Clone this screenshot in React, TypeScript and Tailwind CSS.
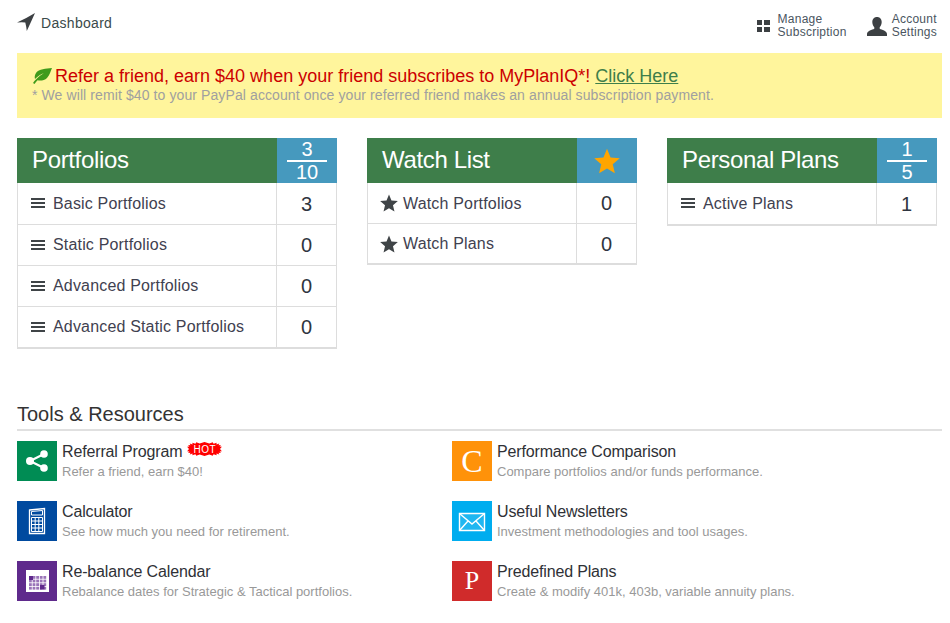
// ── Small drawn icons ────────────────────────────────────────────────────────

function Bars() {
  return (
    <svg width="15" height="11" viewBox="0 0 15 11" className="shrink-0 fill-[#3f4447]">
      <rect x="1" y="0" width="14" height="2" />
      <rect x="1" y="4" width="14" height="2" />
      <rect x="1" y="8" width="14" height="2" />
    </svg>
  );
}

function SolidStar({ size, color }: { size: number; color: string }) {
  return (
    <svg width={size} height={size} viewBox="0 0 24 24" className="shrink-0" fill={color}>
      <path d="M12 .8l3.300 7.900 8.500.7-6.500 5.600 2 8.300L12 18.900l-7.300 4.400 2-8.300L.2 9.400l8.500-.7z" />
    </svg>
  );
}

function Arrow() {
  return (
    <svg width="18" height="18" viewBox="0 0 18 18" className="shrink-0 fill-[#3c4043]">
      <path d="M18 0Q9 5.500 0 9.500q5 -.5 8.300 0q1 4 1.500 8.500Q14 9 18 0z" />
    </svg>
  );
}

function Leaf() {
  return (
    <svg width="20" height="16" viewBox="0 0 20 16" className="shrink-0">
      <path d="M20 0C14 1 7 .5 4 5c-1.500 2.200-1.500 4.500-1 6 3-3 6-5 9-6-3 2-7 4.500-11 10l1.500 1c1-1.500 2-2.800 3-3.700 3 .7 7 .3 9.500-2.300C18 6.800 18.500 3 20 0z" fill="#3f9b1b" />
    </svg>
  );
}

function Grid() {
  return (
    <svg width="13" height="13" viewBox="0 0 13 13" className="fill-[#3c4043]">
      <rect x="0" y="0" width="5" height="5" />
      <rect x="7" y="0" width="6" height="5" />
      <rect x="0" y="7" width="5" height="5" />
      <rect x="7" y="7" width="6" height="5" />
    </svg>
  );
}

function Person() {
  return (
    <svg width="20" height="19" viewBox="0 0 20 19" className="fill-[#3c4043]">
      <path d="M10 0c3 0 4.700 2.200 4.700 5 0 2.200-.9 4-2 5.200v1.600c2 1 7.300 2.200 7.300 5.200v2H0v-2c0-3 5.300-4.200 7.300-5.200v-1.600C6.200 9 5.300 7.200 5.300 5 5.300 2.200 7 0 10 0z" />
    </svg>
  );
}

function ShareIcon() {
  return (
    <svg width="40" height="40" viewBox="0 0 40 40" fill="#fff" stroke="#fff">
      <path d="M27 13L13 20l14 7" fill="none" strokeWidth="2.200" />
      <circle cx="27" cy="13" r="3.800" stroke="none" />
      <circle cx="13" cy="20" r="4" stroke="none" />
      <circle cx="27" cy="27" r="3.800" stroke="none" />
    </svg>
  );
}

function Calculator() {
  return (
    <svg width="40" height="40" viewBox="0 0 40 40" fill="none" stroke="#fff">
      <path d="M12.500 9L27.500 7.500V32.500H12.500z" strokeWidth="1.300" />
      <path d="M14.500 10.500l11-1v4.500h-11z" strokeWidth="1" />
      <path d="M14.500 16.500h11v14h-11zM14.500 20h11M14.500 23.500h11M14.500 27h11M18.200 16.500v14M21.800 16.500v14" strokeWidth="1" />
    </svg>
  );
}

function Calendar() {
  const cells: { x: number; y: number }[] = [];
  for (let r = 0; r < 4; r++) {
    for (let c = 0; c < 5; c++) cells.push({ x: 12 + c * 3.6, y: 15 + r * 3.6 });
  }
  return (
    <svg width="40" height="40" viewBox="0 0 40 40">
      <rect x="9" y="9" width="23" height="22" fill="#fff" />
      {cells.map((p) => (
        <rect key={`${p.x}-${p.y}`} x={p.x} y={p.y} width="2.800" height="2.800" fill="#9a74b8" />
      ))}
      <rect x="12" y="15" width="4" height="4" fill="#5f2a8c" />
      <rect x="23" y="24" width="4.500" height="4.500" fill="#5f2a8c" />
    </svg>
  );
}

function Mail() {
  return (
    <svg width="40" height="40" viewBox="0 0 40 40" fill="none" stroke="#fff" strokeWidth="1.400">
      <path d="M7.500 12.500h25v17h-25z" fill="#fff" fillOpacity="0.12" />
      <path d="M7.500 12.500L20 23l12.500-10.500M7.500 29.500L16 20M32.500 29.500L24 20" />
    </svg>
  );
}

function HotBadge() {
  // jagged starburst behind the word, squared off towards a rounded box
  const pts: string[] = [];
  const n = 22;
  for (let i = 0; i < n * 2; i++) {
    const a = (Math.PI * i) / n;
    const c = Math.cos(a);
    const s = Math.sin(a);
    const rx = i % 2 ? 17.5 : 15.5;
    const ry = i % 2 ? 7 : 5.5;
    const x = 17.5 + rx * Math.sign(c) * Math.pow(Math.abs(c), 0.6);
    const y = 7 + ry * Math.sign(s) * Math.pow(Math.abs(s), 0.6);
    pts.push(`${x.toFixed(1)},${y.toFixed(1)}`);
  }
  return (
    <span className="relative ml-[5px] inline-flex h-[14px] w-[35px] -translate-y-[3px] items-center justify-center">
      <svg width="35" height="14" viewBox="0 0 35 14" className="absolute inset-0">
        <polygon points={pts.join(" ")} fill="#f00" />
      </svg>
      <span className="relative pt-[1px] text-[10px] leading-none tracking-[0.5px] text-white">HOT</span>
    </span>
  );
}

// ── Data ─────────────────────────────────────────────────────────────────────

type Row = { label: string; count: number };

const PORTFOLIOS: Row[] = [
  { label: "Basic Portfolios", count: 3 },
  { label: "Static Portfolios", count: 0 },
  { label: "Advanced Portfolios", count: 0 },
  { label: "Advanced Static Portfolios", count: 0 },
];

const WATCH: Row[] = [
  { label: "Watch Portfolios", count: 0 },
  { label: "Watch Plans", count: 0 },
];

const PLANS: Row[] = [{ label: "Active Plans", count: 1 }];

const TOOLS_LEFT = [
  { title: "Referral Program", sub: "Refer a friend, earn $40!", bg: "bg-[#008c54]", icon: <ShareIcon />, hot: true },
  { title: "Calculator", sub: "See how much you need for retirement.", bg: "bg-[#004a9f]", icon: <Calculator /> },
  { title: "Re-balance Calendar", sub: "Rebalance dates for Strategic & Tactical portfolios.", bg: "bg-[#5f2a8c]", icon: <Calendar /> },
];

const TOOLS_RIGHT = [
  { title: "Performance Comparison", sub: "Compare portfolios and/or funds performance.", bg: "bg-[#ff9209]", icon: <span className="font-['Liberation_Serif',serif] text-[32px] leading-none text-white">C</span> },
  { title: "Useful Newsletters", sub: "Investment methodologies and tool usages.", bg: "bg-[#00adef]", icon: <Mail /> },
  { title: "Predefined Plans", sub: "Create & modify 401k, 403b, variable annuity plans.", bg: "bg-[#d02b2b]", icon: <span className="font-['Liberation_Serif',serif] text-[26px] leading-none text-white">P</span> },
];

// ── Pieces ───────────────────────────────────────────────────────────────────

function Fraction({ top, bottom }: { top: number; bottom: number }) {
  return (
    <div className="flex flex-col items-center text-[20px] leading-[21px] text-white">
      <span>{top}</span>
      <span className="h-[2px] w-[40px] bg-white" />
      <span>{bottom}</span>
    </div>
  );
}

function Card({
  title, badge, rows, width, rowH, icon, gap, nudgeFirst,
}: {
  title: string;
  badge: React.ReactNode;
  rows: Row[];
  width: string;
  rowH: string;
  icon: React.ReactNode;
  gap: string;
  nudgeFirst?: boolean;
}) {
  return (
    <div className={`shrink-0 ${width}`}>
      <div className="flex h-[45px]">
        <div className="flex flex-1 items-center bg-[#3e7e4a] pb-[2px] pl-[15px] text-[24px] tracking-[-0.35px] text-white">{title}</div>
        <div className="flex w-[60px] items-center justify-center bg-[#4699be]">{badge}</div>
      </div>
      <div className="border-x border-b-2 border-[#dddddd]">
        {rows.map((r, i) => (
          <div key={r.label} className={`flex ${rowH} ${i > 0 ? "border-t border-[#dddddd]" : ""}`}>
            <div className={`flex flex-1 items-center pl-[12px] text-[16px] tracking-[0.17px] text-[#3f4150] ${gap}`}>
              {icon}
              <span className={nudgeFirst && i === 0 ? "mt-[2px]" : ""}>{r.label}</span>
            </div>
            <div className="flex w-[60px] items-center justify-center border-l border-[#dddddd] text-[20px] text-[#2f3540]">{r.count}</div>
          </div>
        ))}
      </div>
    </div>
  );
}

function Tool({ title, sub, bg, icon, hot }: { title: string; sub: string; bg: string; icon: React.ReactNode; hot?: boolean }) {
  return (
    <div className="flex h-[40px] gap-[5px]">
      <div className={`flex h-[40px] w-[40px] items-center justify-center ${bg}`}>{icon}</div>
      <div className="pt-[1px]">
        <div className="flex h-[20px] items-center text-[16px] tracking-[-0.15px] text-[#2f3136]">
          {title}
          {hot && <HotBadge />}
        </div>
        <div className="text-[13px] leading-[19px] text-[#999999]">{sub}</div>
      </div>
    </div>
  );
}

// ── Page ─────────────────────────────────────────────────────────────────────

export default function App() {
  return (
    <div className="h-[623px] w-[950px] overflow-hidden bg-white pl-[17px] pr-[8px] font-['Liberation_Sans',Arial,sans-serif]">
      {/* Top bar */}
      <div className="flex h-[53px] items-start">
        <div className="mt-[13px] flex items-start gap-[6px] text-[14px] leading-[20px] tracking-[0.3px] text-[#3a4a4a]">
          <Arrow />
          <span>Dashboard</span>
        </div>
        <div className="ml-auto mt-[13px] flex text-[12px] leading-[13px] tracking-[0.25px] text-[#4a5560]">
          <div className="flex items-center gap-[8px]">
            <Grid />
            <div>Manage<br />Subscription</div>
          </div>
          <div className="ml-[20px] mr-[5px] flex items-center gap-[5px]">
            <Person />
            <div>Account<br />Settings</div>
          </div>
        </div>
      </div>

      {/* Referral banner */}
      <div className="flex h-[65px] flex-col justify-center bg-[#fff59c] pb-[2px] pl-[15px]">
        <div className="flex items-center gap-[3px] text-[18px] leading-[22px] text-[#cc0000]">
          <Leaf />
          <span>
            Refer a friend, earn $40 when your friend subscribes to MyPlanIQ*!{" "}
            <a className="text-[#3e7e4a] underline">Click Here</a>
          </span>
        </div>
        <div className="text-[14px] leading-[17px] tracking-[0.1px] text-[#a0a0a0]">
          * We will remit $40 to your PayPal account once your referred friend makes an annual subscription payment.
        </div>
      </div>

      {/* Summary cards */}
      <div className="mt-[20px] flex h-[252px] items-start gap-[30px]">
        <Card
          title="Portfolios"
          width="w-[320px]"
          rowH="h-[41px]"
          rows={PORTFOLIOS}
          icon={<Bars />}
          gap="gap-2"
          badge={<Fraction top={3} bottom={10} />}
        />
        <Card
          title="Watch List"
          width="w-[270px]"
          rowH="h-[40px]"
          rows={WATCH}
          icon={<SolidStar size={18} color="#3f4447" />}
          gap="gap-[5px]"
          nudgeFirst
          badge={<SolidStar size={26} color="#ffa500" />}
        />
        <Card
          title="Personal Plans"
          width="w-[270px]"
          rowH="h-[41px]"
          rows={PLANS}
          icon={<Bars />}
          gap="gap-2"
          badge={<Fraction top={1} bottom={5} />}
        />
      </div>

      {/* Tools & Resources */}
      <div className="h-[41px] border-b-2 border-[#e0e0e0] text-[20px] leading-[24px] text-[#333333]">
        <div className="pt-[12px]">Tools &amp; Resources</div>
      </div>
      <div className="mt-[10px] flex">
        <div className="flex w-[435px] flex-col gap-[20px]">
          {TOOLS_LEFT.map((t) => <Tool key={t.title} {...t} />)}
        </div>
        <div className="flex flex-col gap-[20px]">
          {TOOLS_RIGHT.map((t) => <Tool key={t.title} {...t} />)}
        </div>
      </div>
    </div>
  );
}
